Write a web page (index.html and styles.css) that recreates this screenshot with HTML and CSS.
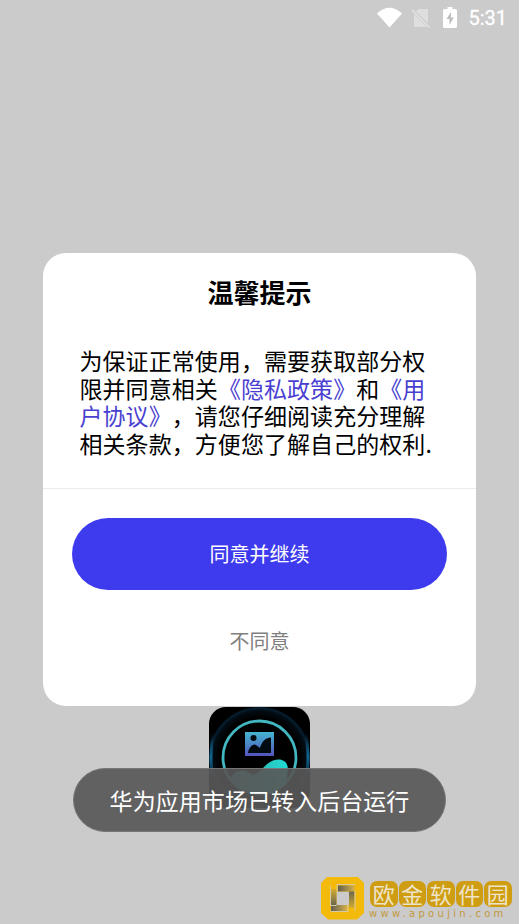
FILE: index.html
```html
<!DOCTYPE html>
<html lang="zh-CN">
<head>
<meta charset="utf-8">
<title>温馨提示</title>
<link rel="stylesheet" href="styles.css">
</head>
<body>
<div class="screen">
  <header class="status">
    <svg class="wifi" width="28" height="22" viewBox="0 0 28 22"><path d="M1 6.500Q13.500-5 26 6.500L13.500 20.500Z" fill="#fff"/></svg>
    <svg class="sim" width="20" height="22" viewBox="0 0 20 22"><path d="M7.500 2H17V16L5 4.500ZM3 7L16 20H3Z" fill="#dedede"/><path d="M1 3L18.500 20.500" stroke="#dedede" stroke-width="1.800"/></svg>
    <svg class="battery" width="14" height="22" viewBox="0 0 14 22"><path d="M4.500 0H9.500V2H12.500Q14 2 14 3.500V19.500Q14 21 12.500 21H1.500Q0 21 0 19.500V3.500Q0 2 1.500 2H4.500Z" fill="#fff"/><path d="M8 5L3.500 12H6.500V18L10.800 10.500H8Z" fill="#bdbdbd"/></svg>
    <time class="clock">5:31</time>
  </header>
  <main class="dialog">
    <h1 class="title">温馨提示</h1>
    <p class="message">为保证正常使用，需要获取部分权<br>限并同意相关<a class="link">《隐私政策》</a>和<a class="link">《用<br>户协议》</a>，请您仔细阅读充分理解<br>相关条款，方便您了解自己的权利.</p>
    <div class="actions">
      <button class="agree">同意并继续</button>
      <button class="decline">不同意</button>
    </div>
  </main>
  <svg class="app-icon" width="101" height="101" viewBox="0 0 101 101">
    <defs>
      <radialGradient id="glow"><stop offset=".78" stop-color="#000"/><stop offset=".92" stop-color="#030d14"/><stop offset=".97" stop-color="#052032"/><stop offset="1" stop-color="#010508"/></radialGradient>
      <linearGradient id="photo" x2="0" y2="1"><stop stop-color="#43b6cf"/><stop offset="1" stop-color="#5353bd"/></linearGradient>
      <linearGradient id="hill" x2="1"><stop stop-color="#3b9f9b"/><stop offset="1" stop-color="#21dbd5"/></linearGradient>
      <linearGradient id="edge" x2="0" y2="1"><stop offset=".1" stop-color="#126490" stop-opacity="0"/><stop offset=".5" stop-color="#126490"/><stop offset=".9" stop-color="#126490" stop-opacity="0"/></linearGradient>
      <clipPath id="tile"><rect width="101" height="101" rx="17"/></clipPath>
      <clipPath id="disc"><circle cx="50.500" cy="50.500" r="36"/></clipPath>
    </defs>
    <g clip-path="url(#tile)">
      <rect width="101" height="101" fill="#000"/>
      <circle cx="50.500" cy="50.500" r="51" fill="url(#glow)"/>
      <path d="M5 20Q-1 50 5 80M96 20Q102 50 96 80" fill="none" stroke="url(#edge)" stroke-width="3"/>
      <circle cx="50.500" cy="50.500" r="36.500" fill="#000" stroke="#42b6c1" stroke-width="2.800"/>
      <path clip-path="url(#disc)" d="M19 76C25 60 37 62 42 67C46 69 50 65 55 60C62 52 71 51 75 54C82 58 79 73 70 90H22Z" fill="url(#hill)"/>
      <rect x="36" y="25" width="29" height="24" fill="url(#photo)"/>
      <circle cx="44.500" cy="31" r="3" fill="#020a12"/>
      <path d="M39 46C40 40 44 36 47 38L51 41C53 34 57 30.500 62 30.500V46Z" fill="#020a12"/>
    </g>
  </svg>
</div>
<div class="toast">华为应用市场已转入后台运行</div>
<div class="watermark">
  <svg class="mark" width="43" height="43" viewBox="0 0 43 43">
    <defs>
      <linearGradient id="h" x2="1"><stop stop-color="#625f50"/><stop offset="1" stop-color="#d3b04a"/></linearGradient>
      <linearGradient id="v" x2="0" y2="1"><stop stop-color="#d3ae30"/><stop offset="1" stop-color="#6b664d"/></linearGradient>
      <linearGradient id="u" x2="0" y2="1"><stop stop-color="#6b664d"/><stop offset="1" stop-color="#d3ae30"/></linearGradient>
    </defs>
    <path fill="#f3b90b" fill-rule="evenodd" d="M6 0H37L43 6V36L36 42.500H7L0 36V6ZM15.500 14.500V28H28V14.500Z"/>
    <path d="M17 8.500H33.500V14.500H17Z" fill="url(#h)"/>
    <path d="M10 12H15.500V28H10Z" fill="url(#v)"/>
    <path d="M10 28H26V34H10Z" fill="url(#h)"/>
    <path d="M28 14.500H33.500V31H28Z" fill="url(#u)"/>
    <path d="M16 14.500V7.500H34M9.500 9V28.500H15.500M27 28V34.500H9.500M34 14V34" fill="none" stroke="#d4cba5" stroke-width="1"/>
  </svg>
  <div class="brand">
    <div class="name"><span>欧</span><span>金</span><span>软</span><span>件</span><span>园</span></div>
    <div class="site">www.apoujin.com</div>
  </div>
</div>
</body>
</html>
```
FILE: styles.css
```css
* { box-sizing: border-box; }
body {
  margin: 0;
  position: relative;
  height: 924px;
  overflow: hidden;
  background: #cbcbcb;
  font-family: "Noto Sans CJK SC", sans-serif;
  text-spacing-trim: space-all;
}
.screen { display: flex; flex-direction: column; align-items: center; }
.status {
  align-self: stretch;
  height: 253px;
  padding: 7px 12px 0 0;
  display: flex;
  justify-content: flex-end;
  align-items: flex-start;
}
.sim { margin: 0 12px 0 7px; }
.clock { margin-left: 11px; font: 400 20px/22px Roboto, sans-serif; color: #fff; -webkit-text-stroke: .3px #fff; }
.dialog {
  width: 433px;
  height: 452.5px;
  border-radius: 23px;
  background: #fff;
  color: #000;
}
.title { margin: 0; padding-top: 19px; font-size: 26px; line-height: 40px; font-weight: 700; text-align: center; }
.message {
  margin: 0;
  height: 177px;
  padding: 35px 0 0 36.5px;
  border-bottom: 1px solid #ebebeb;
  font-size: 23px;
  line-height: 27.5px;
  letter-spacing: .06px;
  white-space: nowrap;
}
.link { color: #4940d1; }
.actions { display: flex; flex-direction: column; align-items: center; padding-top: 29px; }
button { border: 0; padding: 0; font: 20px/30px "Noto Sans CJK SC", sans-serif; background: none; }
.agree { width: 375px; height: 72px; border-radius: 36px; background: #3e3aed; color: #fff; }
.decline { margin-top: 36px; color: #808080; }
.app-icon { margin-top: 1.5px; }
.toast {
  position: absolute;
  left: 73px;
  top: 768px;
  width: 373px;
  height: 64px;
  border-radius: 32px;
  border: 1px solid #777;
  background: rgba(88, 88, 88, .92);
  color: #fff;
  font-size: 23px;
  line-height: 62px;
  letter-spacing: .06px;
  text-align: center;
}
.watermark { position: absolute; left: 321px; top: 877px; display: flex; gap: 6px; }
.name { display: flex; gap: 1px; margin-top: 4px; }
.name span {
  width: 27.5px;
  height: 26px;
  border-radius: 7px;
  background: #cf9d12;
  color: #eee4c9;
  font-size: 22px;
  line-height: 25px;
  text-align: center;
}
.site { margin: 1px 0 0 -1px; font: 10px/12px "DejaVu Sans", sans-serif; letter-spacing: 3.3px; color: #c29a3d; white-space: nowrap; }
```
